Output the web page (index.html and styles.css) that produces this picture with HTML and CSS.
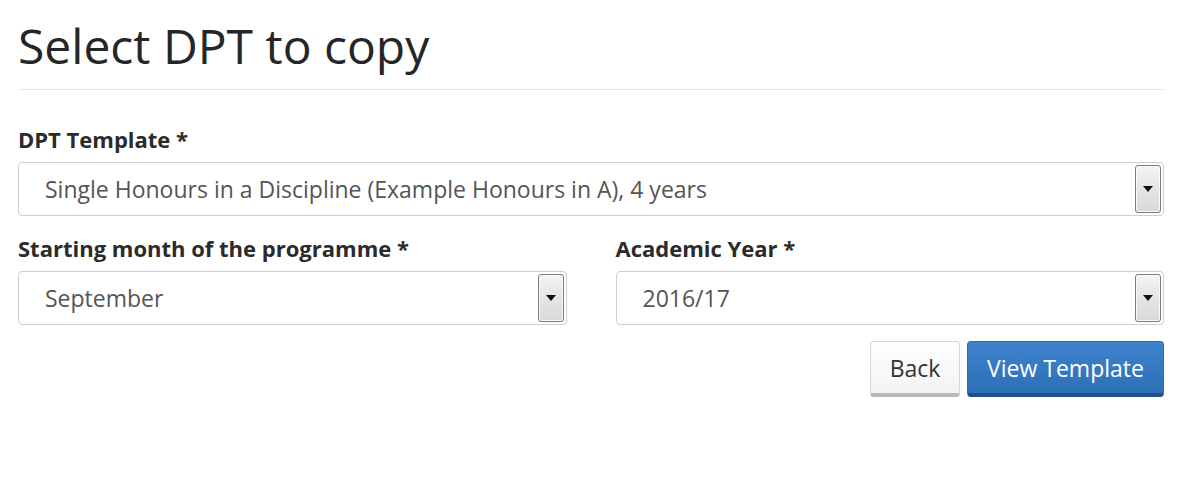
FILE: index.html
```html
<!DOCTYPE html>
<html>
<head>
<meta charset="utf-8">
<link rel="stylesheet" href="styles.css">
</head>
<body>
<div class="container">
  <h1 class="title">Select DPT to copy</h1>
  <div class="divider"></div>
  <div class="field">
    <div class="label">DPT Template *</div>
    <div class="select">
      <span class="value">Single Honours in a Discipline (Example Honours in A), 4 years</span>
      <span class="arrow"><span class="tri"></span></span>
    </div>
  </div>
  <div class="row">
    <div class="field col">
      <div class="label">Starting month of the programme *</div>
      <div class="select">
        <span class="value">September</span>
        <span class="arrow"><span class="tri"></span></span>
      </div>
    </div>
    <div class="field col">
      <div class="label">Academic Year *</div>
      <div class="select">
        <span class="value">2016/17</span>
        <span class="arrow"><span class="tri"></span></span>
      </div>
    </div>
  </div>
  <div class="actions">
    <button class="btn btn-default">Back</button>
    <button class="btn btn-primary">View Template</button>
  </div>
</div>
</body>
</html>
```
FILE: styles.css
```css
* { box-sizing: border-box; }
html, body { margin: 0; padding: 0; background: #fff; }
body { font-family: "Open Sans", "Noto Sans", sans-serif; color: #333; }
.container { width: 1146px; margin-left: 18px; }
.title {
  font-size: 48px;
  font-weight: 400;
  line-height: 60px;
  margin: 16px 0 0 0;
  color: #262626;
}
.divider { height: 1px; background: #e8e8e8; margin-top: 13px; }
.label {
  font-weight: 700;
  font-size: 22px;
  line-height: 26px;
  color: #2b2b2b;
  margin-top: 36px;
  margin-bottom: 10px;
}
.row .label { margin-top: 19px; }
.select {
  height: 54px;
  border: 1px solid #cfcfcf;
  border-radius: 4px;
  display: flex;
  align-items: center;
  justify-content: space-between;
  padding: 2px 2px 2px 26px;
  background: #fff;
}
.value { font-size: 23px; color: #555; }
.arrow {
  width: 26px;
  height: 48px;
  border: 1px solid #7a7a7a;
  border-radius: 3px;
  background: linear-gradient(#f4f4f4, #e6e6e6 45%, #d9d9d9);
  display: flex;
  align-items: center;
  justify-content: center;
  box-shadow: inset 0 0 0 1px #fafafa;
}
.tri {
  width: 0; height: 0;
  border-left: 5px solid transparent;
  border-right: 5px solid transparent;
  border-top: 6px solid #111;
}
.row { display: flex; gap: 49px; }
.col { flex: 1; }
.actions { display: flex; justify-content: flex-end; gap: 7px; margin-top: 16px; }
.btn {
  font-family: "Open Sans", "Noto Sans", sans-serif;
  font-size: 23px;
  height: 56px;
  border-radius: 4px;
  padding: 0;
  cursor: pointer;
}
.btn-default {
  width: 90px;
  color: #333;
  background: linear-gradient(#fff, #f3f3f3);
  border: 1px solid #d6d6d6;
  border-bottom: 4px solid #b9b9b9;
}
.btn-primary {
  width: 197px;
  color: #fff;
  background: linear-gradient(#3d83cc, #2e70b8);
  border: 1px solid #2d6cb0;
  border-bottom: 4px solid #1f4f86;
}
```
